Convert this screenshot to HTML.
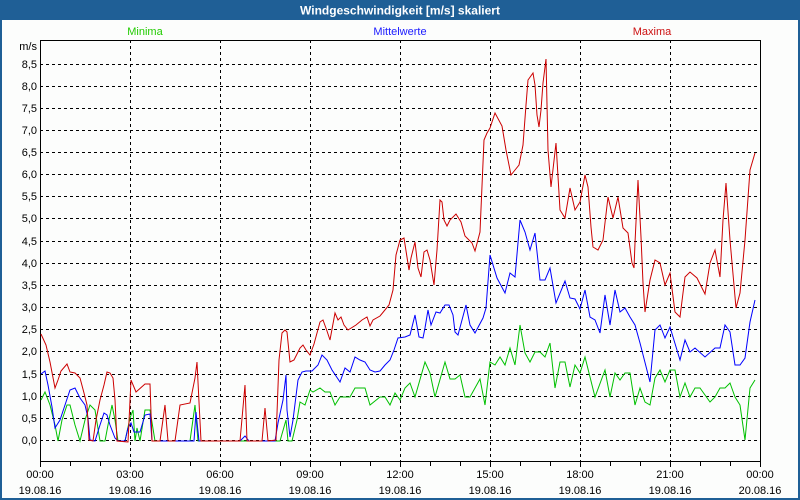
<!DOCTYPE html>
<html><head><meta charset="utf-8"><style>
html,body{margin:0;padding:0;width:800px;height:500px;overflow:hidden;background:#fff}
svg{display:block}
text{font-family:"Liberation Sans",sans-serif;font-size:11px}
</style></head><body>
<svg width="800" height="500" viewBox="0 0 800 500" xmlns="http://www.w3.org/2000/svg">
<rect x="0" y="0" width="800" height="500" fill="#1f5f96"/>
<rect x="2" y="20" width="796" height="478" fill="#fcfdfc"/>
<text x="400" y="14.5" text-anchor="middle" fill="#fff" font-weight="bold" style="font-size:12px">Windgeschwindigkeit [m/s] skaliert</text>
<text x="145" y="35" text-anchor="middle" fill="#22cc00">Minima</text>
<text x="400" y="35" text-anchor="middle" fill="#1a1aff">Mittelwerte</text>
<text x="652" y="35" text-anchor="middle" fill="#cc1111">Maxima</text>
<g stroke="#000" stroke-width="1" stroke-dasharray="3,3" fill="none" shape-rendering="crispEdges">
<path d="M40 64.5H760M40 86.5H760M40 108.5H760M40 130.5H760M40 152.5H760M40 174.5H760M40 196.5H760M40 218.5H760M40 241.5H760M40 263.5H760M40 285.5H760M40 307.5H760M40 329.5H760M40 351.5H760M40 374.5H760M40 396.5H760M40 418.5H760M40 440.5H760"/>
<path d="M130.5 40V461M220.5 40V461M310.5 40V461M400.5 40V461M490.5 40V461M580.5 40V461M670.5 40V461"/>
</g>
<g stroke="#000" stroke-width="1" fill="none" shape-rendering="crispEdges">
<path d="M40.5 40V461.5H760.5V40M40 40.5H760"/>
<path d="M40.5 461V467M70.5 461V466M100.5 461V466M130.5 461V467M160.5 461V466M190.5 461V466M220.5 461V467M250.5 461V466M280.5 461V466M310.5 461V467M340.5 461V466M370.5 461V466M400.5 461V467M430.5 461V466M460.5 461V466M490.5 461V467M520.5 461V466M550.5 461V466M580.5 461V467M610.5 461V466M640.5 461V466M670.5 461V467M700.5 461V466M730.5 461V466M760.5 461V467"/>
</g>
<g fill="#000" text-anchor="end">
<text x="37" y="50">m/s</text>
<text x="37" y="68">8,5</text><text x="37" y="90">8,0</text><text x="37" y="112">7,5</text><text x="37" y="134">7,0</text><text x="37" y="156">6,5</text><text x="37" y="178">6,0</text><text x="37" y="200">5,5</text><text x="37" y="222">5,0</text><text x="37" y="245">4,5</text><text x="37" y="267">4,0</text><text x="37" y="289">3,5</text><text x="37" y="311">3,0</text><text x="37" y="333">2,5</text><text x="37" y="355">2,0</text><text x="37" y="378">1,5</text><text x="37" y="400">1,0</text><text x="37" y="422">0,5</text><text x="37" y="444">0,0</text>
</g>
<g fill="#000" text-anchor="middle">
<text x="40" y="478">00:00</text><text x="40" y="494">19.08.16</text>
<text x="130" y="478">03:00</text><text x="130" y="494">19.08.16</text>
<text x="220" y="478">06:00</text><text x="220" y="494">19.08.16</text>
<text x="310" y="478">09:00</text><text x="310" y="494">19.08.16</text>
<text x="400" y="478">12:00</text><text x="400" y="494">19.08.16</text>
<text x="490" y="478">15:00</text><text x="490" y="494">19.08.16</text>
<text x="580" y="478">18:00</text><text x="580" y="494">19.08.16</text>
<text x="670" y="478">21:00</text><text x="670" y="494">19.08.16</text>
<text x="760" y="478">00:00</text><text x="760" y="494">20.08.16</text>
</g>
<g fill="none" stroke-width="1">
<polyline stroke="#00c000" points="41,400 45,392 50,405 55,425 58,441 62,420 67,405 70,405 75,425 80,441 85,420 90,405 95,410 100,441 105,441 108,425 112,405 115,420 118,441 125,441 130,418 133,410 135,441 137,428 140,441 145,410 150,410 155,441 190,441 195,405 198,441 280,441 286,420 288,441 292,441 297,420 300,402 305,405 310,390 313,392 320,388 325,392 330,392 335,405 340,397 350,397 355,388 365,388 370,405 380,397 385,397 390,405 395,393 400,400 405,388 410,383 415,397 425,362 430,373 435,397 445,362 450,379 455,379 460,375 465,397 470,397 480,379 485,405 490,362 495,365 500,357 505,365 510,348 515,365 520,325 525,353 530,362 535,352 540,352 545,357 550,343 555,388 560,362 565,362 570,387 575,365 580,373 585,357 595,397 605,370 610,397 615,373 620,380 625,373 630,373 635,405 640,388 645,402 650,405 655,378 660,370 665,382 670,370 675,370 680,397 685,383 690,397 695,388 700,388 710,402 715,397 720,388 725,388 730,383 735,397 740,405 745,440 750,388 755,380"/>
<polyline stroke="#0000ff" points="41,374 45,371 48,385 52,407 55,428 60,420 65,405 70,390 75,388 80,398 85,405 88,418 90,440 95,441 100,425 104,413 107,415 110,425 115,438 118,441 125,441 128,428 131,423 134,432 140,432 145,415 150,414 152,441 194,441 196,412 199,441 240,441 245,436 249,441 275,441 278,423 283,400 286,375 287,410 290,437 293,420 298,380 302,372 306,371 312,371 318,365 322,355 327,360 332,370 340,382 345,368 350,372 355,357 360,360 365,362 370,370 375,372 380,371 385,365 390,360 394,350 398,338 405,337 410,335 415,315 419,337 423,338 425,328 428,310 431,325 436,312 440,313 445,305 449,305 453,315 455,332 458,335 462,320 466,305 470,325 475,333 483,318 486,308 490,255 497,278 505,293 510,273 515,277 520,220 525,232 530,250 535,233 540,280 545,280 550,268 556,303 565,281 570,298 575,299 580,309 585,290 590,317 595,320 600,333 605,295 610,325 615,290 620,312 625,308 630,317 635,325 640,343 650,382 655,330 660,325 665,338 670,327 680,360 685,340 690,352 695,348 705,357 715,348 720,348 725,325 730,332 735,365 740,365 745,358 750,322 755,300"/>
<polyline stroke="#cc0000" points="41,334 46,345 50,362 55,388 58,380 61,371 67,364 70,372 75,373 80,378 84,393 87,405 89,440 93,441 96,420 100,400 104,385 107,372 110,373 113,378 115,400 117,441 128,442 131,380 136,392 145,384 150,384 152,441 160,441 165,405 168,441 175,441 180,405 190,403 195,378 197,362 199,402 201,441 240,441 245,385 247,441 262,441 265,408 268,441 276,440 279,360 282,333 285,330 287,332 290,362 294,360 300,348 303,345 306,350 310,355 314,344 320,322 323,320 327,331 330,340 335,313 338,320 341,317 344,325 348,330 356,325 362,320 367,317 370,326 373,320 380,316 389,305 393,290 396,255 400,240 404,238 409,270 411,258 415,242 418,268 421,277 424,252 427,250 430,260 434,285 437,250 440,200 442,202 444,220 447,226 450,220 456,214 461,222 465,236 472,243 475,251 480,232 484,140 487,133 490,128 495,113 502,126 506,150 511,175 515,170 519,165 523,145 526,105 528,80 533,73 535,85 537,115 539,127 541,110 543,83 546,59 548,150 551,187 556,143 560,210 565,218 570,188 575,210 580,202 585,175 588,187 591,227 593,247 598,250 603,240 608,197 613,218 618,197 623,228 628,233 632,263 634,268 635,243 638,180 641,237 643,283 645,312 650,280 655,260 660,263 665,285 670,273 675,312 680,317 685,277 690,272 697,278 705,294 710,263 715,250 720,277 723,220 726,183 730,240 736,308 740,293 745,240 750,170 755,153"/>
</g>
</svg>
</body></html>
